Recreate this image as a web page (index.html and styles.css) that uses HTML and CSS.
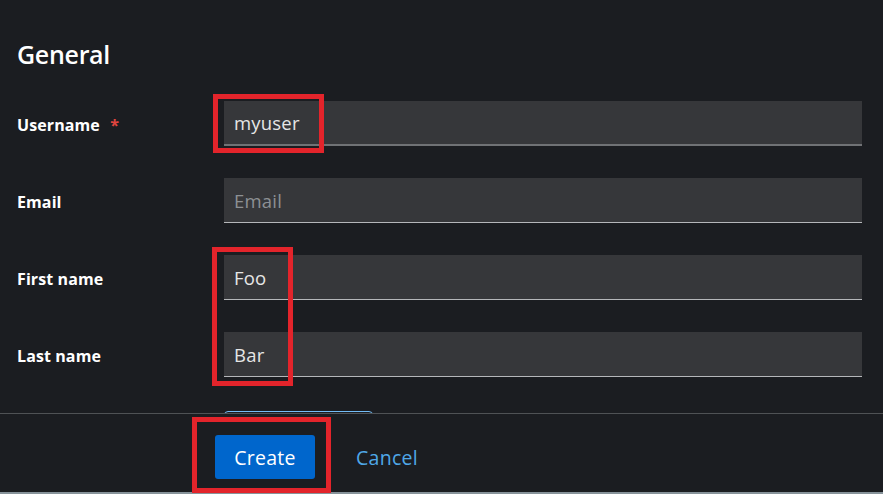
FILE: index.html
```html
<!DOCTYPE html>
<html lang="en">
<head>
<meta charset="utf-8">
<title>Create user</title>
<link rel="stylesheet" href="styles.css">
</head>
<body>
<div class="page">
  <main class="form-area">
    <h2 class="section-title">General</h2>
    <div class="form-grid">
      <label class="field-label" for="username">Username <span class="req">*</span></label>
      <div class="input first"><span class="value">myuser</span></div>

      <label class="field-label" for="email">Email</label>
      <div class="input"><span class="placeholder">Email</span></div>

      <label class="field-label" for="first">First name</label>
      <div class="input"><span class="value">Foo</span></div>

      <label class="field-label" for="last">Last name</label>
      <div class="input"><span class="value">Bar</span></div>

      <div></div>
      <div class="outline-btn"></div>
    </div>
  </main>
  <footer class="footer">
    <button class="btn-primary">Create</button>
    <button class="btn-link">Cancel</button>
  </footer>
  <div class="bottom-line"></div>
</div>
<div class="mark mark-user"></div>
<div class="mark mark-names"></div>
<div class="mark mark-create"></div>
</body>
</html>
```
FILE: styles.css
```css
* { box-sizing: border-box; }
html, body {
  margin: 0;
  padding: 0;
  background: #1b1d21;
  font-family: "Open Sans", "Noto Sans", sans-serif;
  color: #f0f0f0;
}
.page {
  position: relative;
  width: 883px;
  height: 494px;
  display: flex;
  flex-direction: column;
  overflow: hidden;
}
.form-area {
  height: 413px;
  overflow: hidden;
  padding: 36px 21px 0 17px;
}
.section-title {
  margin: 0 0 29px 0;
  font-size: 25px;
  font-weight: 600;
  line-height: 36px;
  color: #ffffff;
  letter-spacing: -0.3px;
}
.form-grid {
  display: grid;
  grid-template-columns: 207px 1fr;
  row-gap: 32px;
  align-items: center;
}
.field-label {
  font-size: 16px;
  font-weight: 700;
  color: #ffffff;
  letter-spacing: 0.1px;
  padding-top: 3px;
}
.req {
  color: #e0453f;
  margin-left: 6px;
}
.input {
  height: 45px;
  background: #36373a;
  border-bottom: 1px solid #b5b7ba;
  display: flex;
  align-items: center;
  padding: 0 10px;
  font-size: 18.5px;
  letter-spacing: 0.2px;
}
.input.first {
  border-bottom: 2px solid #707275;
}
.value { color: #e6e6e6; }
.placeholder { color: #8d9094; }
.outline-btn {
  width: 149px;
  height: 40px;
  border: 1px solid #73bcf7;
  border-radius: 4px;
  margin-top: 2px;
  align-self: start;
}
.footer {
  flex: 1;
  border-top: 1px solid #4f5255;
  background: #1b1d21;
  display: flex;
  align-items: flex-start;
  padding: 21px 0 0 215px;
  gap: 25px;
}
.btn-primary {
  height: 44px;
  width: 100px;
  border: none;
  border-radius: 3px;
  background: #0066cc;
  color: #ffffff;
  font-family: inherit;
  font-size: 19.5px;
  letter-spacing: 0.3px;
  padding: 0;
}
.btn-link {
  height: 44px;
  border: none;
  background: transparent;
  color: #4fa8e8;
  font-family: inherit;
  font-size: 19.5px;
  letter-spacing: 0.3px;
  padding: 0 16px;
}
.bottom-line {
  height: 2px;
  background: #87939a;
}
.mark {
  position: absolute;
  border: 5px solid #e3242b;
}
.mark-user { left: 213px; top: 94px; width: 111px; height: 59px; }
.mark-names { left: 212px; top: 247px; width: 81px; height: 139px; }
.mark-create { left: 192px; top: 417px; width: 139px; height: 76px; }
```
